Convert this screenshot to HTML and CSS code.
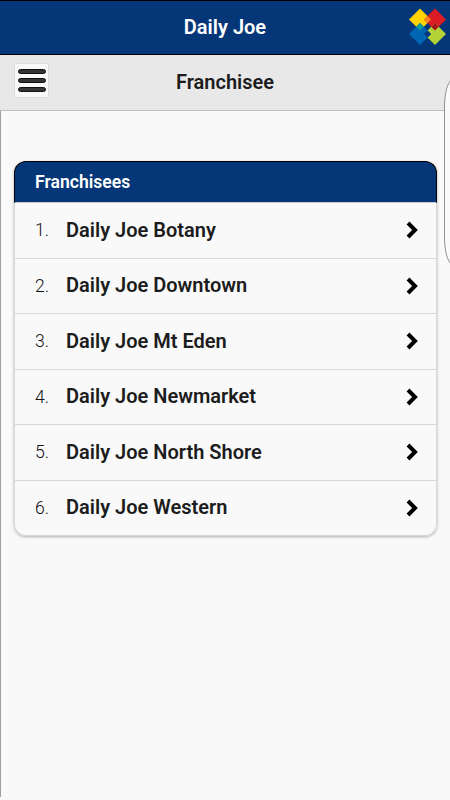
FILE: index.html
```html
<!DOCTYPE html>
<html lang="en">
<head>
    <meta charset="UTF-8">
    <meta name="viewport" content="width=device-width, initial-scale=1.0">
    <title>Daily Joe</title>
    <link rel="stylesheet" href="styles.css">
</head>
<body>
    <header class="header">
        <h1>Daily Joe</h1>
        <svg class="logo" width="38" height="38" viewBox="0 0 38 38">
            <path d="M11 0.5L22 11.5L11 22.5L0 11.5Z" fill="#ffd200"/>
            <path d="M26 0.5L37 11.5L26 22.5L15 11.5Z" fill="#dc1c24"/>
            <path d="M26 15L37 26L26 37L15 26Z" fill="#b2d235"/>
            <path d="M11 15L22 26L11 37L0 26Z" fill="#0066b3"/>
            <path d="M18.5 8L22 11.5L18.5 15L15 11.5Z" fill="#f58220"/>
            <path d="M26 15L29.7 18.7L26 22.5L22.2 18.7Z" fill="#a8141a"/>
            <path d="M18.5 22.5L22 26L18.5 29.5L15 26Z" fill="#053678"/>
            <path d="M11 15L14.7 18.7L11 22.5L7.2 18.7Z" fill="#0a9a9a"/>
        </svg>
    </header>

    <div class="toolbar">
        <button class="menu-btn" aria-label="Menu">
            <span></span>
            <span></span>
            <span></span>
        </button>
        <h2>Franchisee</h2>
    </div>

    <main class="content">
        <div class="list">
            <div class="list-title">Franchisees</div>
            <a class="row"><span class="num">1.</span><span class="name">Daily Joe Botany</span><svg class="arrow" width="12" height="18" viewBox="0 0 12 18"><path d="M2 2L9 9L2 16"/></svg></a>
            <a class="row"><span class="num">2.</span><span class="name">Daily Joe Downtown</span><svg class="arrow" width="12" height="18" viewBox="0 0 12 18"><path d="M2 2L9 9L2 16"/></svg></a>
            <a class="row"><span class="num">3.</span><span class="name">Daily Joe Mt Eden</span><svg class="arrow" width="12" height="18" viewBox="0 0 12 18"><path d="M2 2L9 9L2 16"/></svg></a>
            <a class="row"><span class="num">4.</span><span class="name">Daily Joe Newmarket</span><svg class="arrow" width="12" height="18" viewBox="0 0 12 18"><path d="M2 2L9 9L2 16"/></svg></a>
            <a class="row"><span class="num">5.</span><span class="name">Daily Joe North Shore</span><svg class="arrow" width="12" height="18" viewBox="0 0 12 18"><path d="M2 2L9 9L2 16"/></svg></a>
            <a class="row"><span class="num">6.</span><span class="name">Daily Joe Western</span><svg class="arrow" width="12" height="18" viewBox="0 0 12 18"><path d="M2 2L9 9L2 16"/></svg></a>
        </div>
    </main>

    <!-- side drawer peeking in over the right edge -->
    <div class="edge-panel"></div>
</body>
</html>
```
FILE: styles.css
```css
* {
    box-sizing: border-box;
}

body {
    position: relative;
    display: flex;
    flex-direction: column;
    height: 100vh;
    margin: 0;
    overflow: hidden;
    background-color: #f9f9f9;
    font-family: Roboto, sans-serif;
    color: #1c1c1c;
}

h1, h2 {
    margin: 0;
    padding-bottom: 2px;
    font-size: 20px;
    line-height: 24px;
    font-weight: 600;
    text-align: center;
    grid-column: 2;
}

.header {
    display: grid;
    grid-template-columns: 50px 1fr 50px;
    align-items: center;
    height: 55px;
    background-color: #053678;
    border-top: 1px solid #000;
    border-bottom: 1px solid #000;
    color: #fff;
}

.logo {
    margin: -2px 0 0 9px;
}

.toolbar {
    display: grid;
    grid-template-columns: 50px 1fr 50px;
    align-items: center;
    height: 56px;
    background-color: #e8e8e8;
    border-bottom: 1px solid #c0c0c0;
}

.menu-btn {
    display: flex;
    flex-direction: column;
    justify-content: center;
    align-items: center;
    gap: 4px;
    width: 35px;
    height: 35px;
    margin: -5px 0 0 14px;
    padding: 0;
    background-color: #f8f8f8;
    border: 1px solid #dedede;
}

.menu-btn span {
    width: 28px;
    height: 5px;
    border: 1px solid #111;
    border-radius: 3px;
    background-color: #333;
}

.content {
    flex: 1;
    margin-bottom: 3px;
    padding: 50px 12px 0 13px;
    border-left: 1px solid #a0a0a0;
}

.list {
    width: 423px;
    border-radius: 12px;
    box-shadow: 0 1px 3px rgba(0, 0, 0, 0.3);
}

.list-title {
    height: 42px;
    padding-left: 20px;
    border: 1px solid #000;
    border-bottom: 1px solid #c8c8d0;
    border-radius: 12px 12px 0 0;
    background-color: #053678;
    color: #fff;
    font-size: 17.6px;
    font-weight: 600;
    line-height: 40px;
}

.row {
    display: flex;
    align-items: center;
    height: 55.5px;
    padding: 0 18px 0 20px;
    border: 1px solid #d8d8d8;
    border-top: 0;
    background-color: #f9f9f9;
}

.row:last-child {
    border-radius: 0 0 12px 12px;
}

.num {
    width: 31px;
    color: #111;
    font-size: 17.6px;
    font-weight: 350;
}

.name {
    flex: 1;
    padding-bottom: 1px;
    font-size: 20px;
    font-weight: 600;
}

.arrow path {
    fill: none;
    stroke: #000;
    stroke-width: 4;
}

.edge-panel {
    position: absolute;
    top: 79px;
    left: 444px;
    width: 20px;
    height: 186px;
    border: 1px solid #909090;
    border-radius: 9px / 28px;
    background-color: #fafafa;
}
```
